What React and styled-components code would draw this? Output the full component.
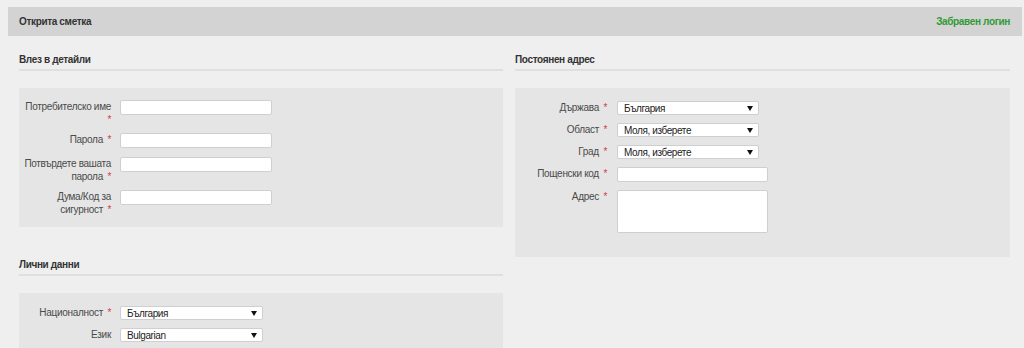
import React from "react";
import styled, { createGlobalStyle } from "styled-components";

const Global = createGlobalStyle`
  html, body { margin: 0; padding: 0; background: #efefef; }
  body { font-family: "Liberation Sans", Arial, sans-serif; font-size: 10px; color: #444; }
`;

const Page = styled.div`
  padding: 7px 2px 0 8px;
`;

const TopBar = styled.div`
  height: 29px;
  background: #d3d3d3;
  display: flex;
  align-items: center;
  justify-content: space-between;
  padding: 0 12px 0 11px;
`;

const TopTitle = styled.span`
  font-weight: bold;
  color: #333;
  font-size: 10px;
  letter-spacing: -0.35px;
`;

const TopLink = styled.a`
  font-weight: bold;
  color: #2f9a35;
  font-size: 10px;
  letter-spacing: -0.35px;
  text-decoration: none;
`;

const Columns = styled.div`
  display: grid;
  grid-template-columns: 484px 495px;
  column-gap: 12px;
  padding: 0 0 0 11px;
`;

const Column = styled.div`
  display: flex;
  flex-direction: column;
  gap: 31px;
  padding-top: 17px;
`;

const Section = styled.section`
  display: flex;
  flex-direction: column;
`;

const Heading = styled.h3`
  margin: 0;
  font-size: 10px;
  letter-spacing: -0.35px;
  line-height: 14px;
  font-weight: bold;
  color: #333;
  padding-bottom: 2px;
  border-bottom: 2px solid #dfdfdf;
`;

const Panel = styled.div`
  margin-top: 17px;
  background: #e5e5e5;
  padding: ${(p) => p.$pad || "12px 0 11px 2px"};
  display: flex;
  flex-direction: column;
  gap: ${(p) => p.$gap || 8}px;
`;

const Row = styled.div`
  display: grid;
  grid-template-columns: 90px auto;
  column-gap: ${(p) => p.$gap || 9}px;
  align-items: start;
  min-height: ${(p) => p.$minH || 0}px;
`;

const Label = styled.label`
  text-align: right;
  font-size: 10px;
  letter-spacing: -0.3px;
  line-height: 13px;
  color: #4a4a4a;
`;

const Req = styled.span`
  color: #d0443e;
  margin-left: 2px;
`;

const TextInput = styled.div`
  box-sizing: border-box;
  width: ${(p) => p.$w || 152}px;
  height: ${(p) => p.$h || 15}px;
  background: #fff;
  border: 1px solid #cfcfcf;
  border-radius: 2px;
`;

const SelectBox = styled.div`
  box-sizing: border-box;
  width: ${(p) => p.$w || 143}px;
  height: 14px;
  background: #fff;
  border: 1px solid #cfcfcf;
  border-radius: 2px;
  display: flex;
  align-items: center;
  justify-content: space-between;
  padding: 0 5px 0 6px;
  font-size: 10px;
  letter-spacing: -0.4px;
  color: #222;
`;

const Arrow = () => (
  <svg width="6" height="5" viewBox="0 0 6 5">
    <path d="M0 0 H6 L3 5 Z" fill="#111" />
  </svg>
);

const Field = ({ label, req = true, children, gap, minH }) => (
  <Row $gap={gap} $minH={minH}>
    <Label>
      {label}
      {req && (
        <>
          {" "}
          <Req>*</Req>
        </>
      )}
    </Label>
    {children}
  </Row>
);

const Select = ({ value, w }) => (
  <SelectBox $w={w}>
    <span>{value}</span>
    <Arrow />
  </SelectBox>
);

export default function App() {
  return (
    <>
      <Global />
      <Page>
        <TopBar>
          <TopTitle>Открита сметка</TopTitle>
          <TopLink href="#">Забравен логин</TopLink>
        </TopBar>
        <Columns>
          <Column>
            <Section>
              <Heading>Влез в детайли</Heading>
              <Panel $gap={7}>
                <Field label="Потребителско име" minH={17}>
                  <TextInput />
                </Field>
                <Field label="Парола" minH={17}>
                  <TextInput />
                </Field>
                <Field label="Потвърдете вашата парола" minH={17}>
                  <TextInput />
                </Field>
                <Field label="Дума/Код за сигурност" minH={17}>
                  <TextInput />
                </Field>
              </Panel>
            </Section>
            <Section>
              <Heading>Лични данни</Heading>
              <Panel $pad="13px 0 13px 2px">
                <Field label="Националност">
                  <Select value="България" />
                </Field>
                <Field label="Език" req={false}>
                  <Select value="Bulgarian" />
                </Field>
              </Panel>
            </Section>
          </Column>
          <Column>
            <Section>
              <Heading>Постоянен адрес</Heading>
              <Panel $pad="13px 0 24px 2px">
                <Field label="Държава" gap={10}>
                  <Select value="България" w={142} />
                </Field>
                <Field label="Област" gap={10}>
                  <Select value="Моля, изберете" w={142} />
                </Field>
                <Field label="Град" gap={10}>
                  <Select value="Моля, изберете" w={142} />
                </Field>
                <Field label="Пощенски код" gap={10}>
                  <TextInput $w={151} />
                </Field>
                <Field label="Адрес" gap={10}>
                  <TextInput $w={151} $h={43} />
                </Field>
              </Panel>
            </Section>
          </Column>
        </Columns>
      </Page>
    </>
  );
}
